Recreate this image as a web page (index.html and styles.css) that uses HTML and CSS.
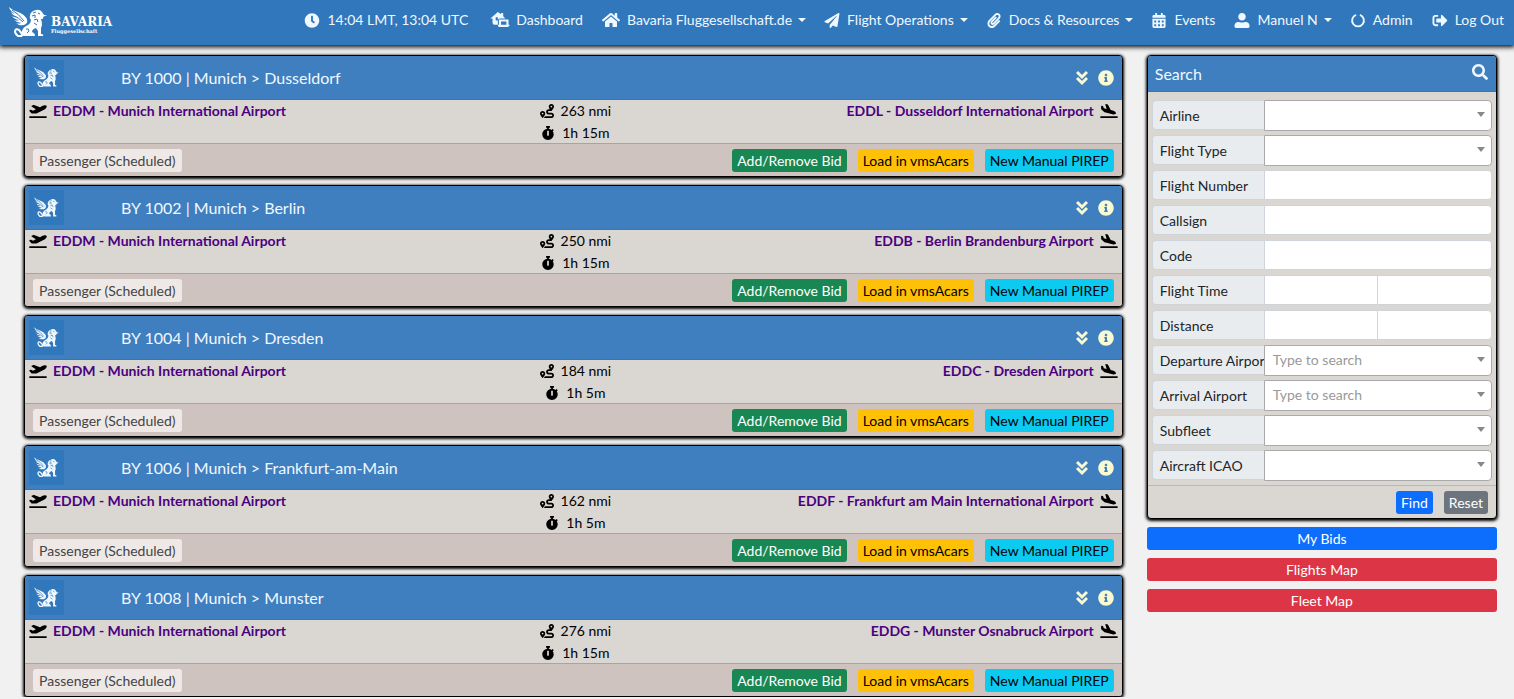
FILE: index.html
```html
<!DOCTYPE html>
<html lang="en">
<head>
<meta charset="utf-8">
<title>Flights - Bavaria Fluggesellschaft</title>
<link rel="stylesheet" href="styles.css">
</head>
<body>
<svg class="sprite" aria-hidden="true">
  <symbol id="griffin" viewBox="0 0 38 31">
    <path d="M0 0Q4 4 9 5Q15 7 18 12Q19 15 17 17Q14 19 10 18L7 16Q10 17 12 16Q7 15 5 13Q8 14 10 13Q5 12 3 9Q6 11 8 10Q3 8 2 5Q4 7 6 7Q1 4 0 0Z"/>
    <path d="M21 8Q22 4 27 3Q31 2 33 5L35 8L38 8L34 10Q35 12 32 12Q33 15 33 18L32 21L32 27Q35 27 34 29H29V24L27 21Q23 22 23 25Q26 26 26 29H15Q12 28 13 24Q14 20 19 18Q22 16 22 13Q20 11 21 8Z"/>
    <path class="tail" d="M14 29Q12 25 10 23Q7 21 6 24Q6 27 9 29H13"/>
    <path class="cut" d="M3 3Q10 7 15 14M5 9Q9 10 14 15M24 6L27 5M23 9L26 8L26 11M25 13L28 12L29 15M29 6L31 7M25 16L28 18M17 22Q20 21 20 24L18 26"/>
  </symbol>
  <symbol id="clock" viewBox="0 0 512 512"><path d="M256,8C119,8,8,119,8,256S119,504,256,504,504,393,504,256,393,8,256,8Zm92.49,313h0l-20,25a16,16,0,0,1-22.49,2.5h0l-67-49.72a40,40,0,0,1-15-31.23V112a16,16,0,0,1,16-16h32a16,16,0,0,1,16,16V256l58,42.5A16,16,0,0,1,348.49,321Z"/></symbol>
  <symbol id="dash" viewBox="0 0 18 15"><path d="M0 6L7 0L10 2V1H12V4L14 6H9Q7 6 7 8V12H4Q2 12 2 10V6ZM5 5V8H7V5ZM8 7H17V12H18Q18 14 16 14H8Q7 14 7 12H8ZM10 9V12H15V9Z" fill-rule="evenodd"/></symbol>
  <symbol id="home" viewBox="0 0 576 512"><path d="M280.37 148.26L96 300.11V464a16 16 0 0 0 16 16l112.06-.29a16 16 0 0 0 15.92-16V368a16 16 0 0 1 16-16h64a16 16 0 0 1 16 16v95.64a16 16 0 0 0 16 16.05L464 480a16 16 0 0 0 16-16V300L295.67 148.26a12.19 12.19 0 0 0-15.3 0zM571.6 251.47L488 182.56V44.05a12 12 0 0 0-12-12h-56a12 12 0 0 0-12 12v72.61L318.47 43a48 48 0 0 0-61 0L4.34 251.47a12 12 0 0 0-1.6 16.9l25.5 31A12 12 0 0 0 45.15 301l235.22-193.74a12.19 12.19 0 0 1 15.3 0L530.9 301a12 12 0 0 0 16.9-1.6l25.5-31a12 12 0 0 0-1.7-16.93z"/></symbol>
  <symbol id="plane" viewBox="0 0 512 512"><path d="M476 3.2L12.5 270.6c-18.1 10.4-15.8 35.6 2.2 43.2L121 358.4l287.3-253.2c5.5-4.9 13.3 2.6 8.6 8.3L176 407v80.5c0 23.6 28.5 32.9 42.5 15.8L282 426l124.6 52.2c14.2 6 30.4-2.9 33-18.2l72-432C515 7.8 493.3-6.8 476 3.2z"/></symbol>
  <symbol id="clip" viewBox="0 0 448 512"><path d="M43.246 466.142c-58.43-60.289-57.341-157.511 1.386-217.581L254.392 34c44.316-45.332 116.351-45.336 160.671 0 43.89 44.894 43.943 117.329 0 162.276L232.214 383.128c-29.855 30.537-78.633 30.111-107.982-.998-28.275-29.97-27.368-77.473 1.452-106.953l143.743-146.835c6.182-6.314 16.312-6.422 22.626-.241l22.861 22.379c6.315 6.182 6.422 16.312.241 22.626L171.427 319.927c-4.932 5.045-5.236 13.428-.648 18.292 4.372 4.634 11.245 4.711 15.688.165l182.849-186.851c19.613-20.062 19.613-52.725-.011-72.798-19.189-19.627-49.957-19.637-69.154 0L90.39 293.295c-34.763 35.56-35.299 93.12-1.191 128.313 34.01 35.093 88.985 35.137 123.058.286l172.06-175.999c6.177-6.319 16.307-6.433 22.626-.256l22.877 22.364c6.319 6.177 6.434 16.307.256 22.626l-172.06 175.998c-59.576 60.938-155.943 60.216-214.77-.485z"/></symbol>
  <symbol id="calendar" viewBox="0 0 448 512"><path fill-rule="evenodd" d="M0 464c0 26.500 21.500 48 48 48h352c26.500 0 48-21.500 48-48V192H0zM64 256h64v64H64zM192 256h64v64h-64zM320 256h64v64h-64zM64 384h64v64H64zM192 384h64v64h-64zM320 384h64v64h-64zM400 64h-48V0h-64v64H160V0H96v64H48C21 64 0 85 0 112v48h448v-48c0-27-21-48-48-48z"/></symbol>
  <symbol id="user" viewBox="0 0 512 512"><path d="M256 256c70.700 0 128-57.300 128-128S326.700 0 256 0 128 57.300 128 128s57.300 128 128 128zm128 48H350c-28 12-60 20-94 20s-66-8-94-20H128C57 304 0 350 0 430v34c0 26.500 21.500 48 48 48h416c26.500 0 48-21.500 48-48v-34c0-80-57-126-128-126z"/></symbol>
  <symbol id="notch" viewBox="0 0 16 16"><path class="line" d="M10 2A6.300 6.300 0 1 1 6 2"/></symbol>
  <symbol id="logout" viewBox="0 0 512 512"><path d="M497 273L329 441c-15 15-41 4.500-41-17v-96H152c-13.300 0-24-10.700-24-24v-96c0-13.300 10.700-24 24-24h136V88c0-21.400 25.900-32 41-17l168 168c9.300 9.400 9.300 24.600 0 34zM192 436v-40c0-6.600-5.400-12-12-12H96c-17.700 0-32-14.300-32-32V160c0-17.700 14.300-32 32-32h84c6.600 0 12-5.400 12-12V76c0-6.600-5.400-12-12-12H96c-53 0-96 43-96 96v192c0 53 43 96 96 96h84c6.600 0 12-5.400 12-12z"/></symbol>
  <symbol id="search" viewBox="0 0 512 512"><path d="M505 442.7L405.3 343c-4.5-4.5-10.6-7-17-7H372c27.6-35.3 44-79.7 44-128C416 93.1 322.9 0 208 0S0 93.1 0 208s93.1 208 208 208c48.3 0 92.7-16.4 128-44v16.3c0 6.4 2.500 12.500 7 17l99.700 99.700c9.400 9.400 24.600 9.400 33.900 0l28.300-28.300c9.400-9.400 9.400-24.600.1-34zM208 336c-70.700 0-128-57.200-128-128 0-70.700 57.200-128 128-128 70.700 0 128 57.200 128 128 0 70.700-57.200 128-128 128z"/></symbol>
  <symbol id="info" viewBox="0 0 512 512"><path d="M256 8C119.043 8 8 119.083 8 256c0 136.997 111.043 248 248 248s248-111.003 248-248C504 119.083 392.957 8 256 8zm0 110c23.196 0 42 18.804 42 42s-18.804 42-42 42-42-18.804-42-42 18.804-42 42-42zm56 254c0 6.627-5.373 12-12 12h-88c-6.627 0-12-5.373-12-12v-24c0-6.627 5.373-12 12-12h12v-64h-12c-6.627 0-12-5.373-12-12v-24c0-6.627 5.373-12 12-12h64c6.627 0 12 5.373 12 12v100h12c6.627 0 12 5.373 12 12v24z"/></symbol>
  <symbol id="more" viewBox="0 0 12 16"><path class="line thick" d="M1 2L6 7L11 2M1 8L6 13L11 8"/></symbol>
  <symbol id="route" viewBox="0 0 512 512"><path d="M416 320h-96c-17.600 0-32-14.400-32-32s14.400-32 32-32h96s96-107 96-160-43-96-96-96-96 43-96 96c0 25.500 22.200 63.400 45.300 96H320c-52.900 0-96 43.100-96 96s43.100 96 96 96h96c17.600 0 32 14.400 32 32s-14.400 32-32 32H185.500c-16 24.800-33.800 47.700-47.300 64H416c52.900 0 96-43.100 96-96s-43.100-96-96-96zm0-256c17.700 0 32 14.300 32 32s-14.300 32-32 32-32-14.300-32-32 14.300-32 32-32zM96 256c-53 0-96 43-96 96s96 160 96 160 96-107 96-160-43-96-96-96zm0 128c-17.700 0-32-14.300-32-32s14.300-32 32-32 32 14.300 32 32-14.300 32-32 32z"/></symbol>
  <symbol id="watch" viewBox="0 0 448 512"><path d="M432 304c0 114.900-93.100 208-208 208S16 418.900 16 304c0-104 76.300-190.200 176-205.500V64h-28c-6.600 0-12-5.400-12-12V12c0-6.600 5.400-12 12-12h120c6.600 0 12 5.400 12 12v40c0 6.600-5.400 12-12 12h-28v34.500c37.500 5.800 71.700 21.600 99.700 44.600l27.500-27.500c4.700-4.700 12.300-4.700 17 0l28.300 28.300c4.700 4.700 4.700 12.300 0 17l-29.400 29.400-.6.6C419.700 223.300 432 262.200 432 304zm-176 36V188.500c0-6.600-5.400-12-12-12h-40c-6.600 0-12 5.400-12 12V340c0 6.600 5.400 12 12 12h40c6.600 0 12-5.400 12-12z"/></symbol>
  <symbol id="depart" viewBox="0 0 640 512"><path d="M624 448H16c-8.84 0-16 7.16-16 16v32c0 8.84 7.16 16 16 16h608c8.84 0 16-7.16 16-16v-32c0-8.84-7.16-16-16-16zM80.55 341.27c6.28 6.84 15.1 10.72 24.33 10.71l130.54-.18a65.62 65.62 0 0 0 29.64-7.12l290.96-147.65c26.74-13.57 50.71-32.94 67.02-58.31 18.31-28.48 20.3-49.09 13.07-63.65-7.21-14.57-24.74-25.27-58.25-27.45-29.85-1.94-59.54 5.92-86.28 19.48l-98.51 49.99-218.7-82.06a17.799 17.799 0 0 0-18-1.11L90.62 67.29c-10.67 5.41-13.25 19.65-5.17 28.53l156.22 98.1-103.21 52.38-72.35-36.47a17.804 17.804 0 0 0-16.07.02L9.91 230.22c-10.44 5.3-13.19 19.12-5.57 28.08l76.21 82.97z"/></symbol>
  <symbol id="arrive" viewBox="0 0 640 512"><path d="M624 448H16c-8.84 0-16 7.16-16 16v32c0 8.84 7.16 16 16 16h608c8.84 0 16-7.16 16-16v-32c0-8.84-7.16-16-16-16zM44.81 205.66l88.74 80a62.607 62.607 0 0 0 25.47 13.93l287.6 78.35c26.48 7.21 54.56 8.72 81 1.36 29.67-8.27 43.44-21.21 47.25-35.71 3.83-14.5-1.73-32.71-23.37-54.96-19.28-19.82-44.35-32.79-70.83-40l-97.51-26.56L282.8 30.22c-1.51-5.81-5.95-10.35-11.66-11.91L206.05.58c-10.56-2.88-20.9 5.32-20.71 16.44l47.92 164.21-102.2-27.84-27.59-67.88c-1.93-4.89-6.01-8.57-11.02-9.93L52.72 64.75c-10.34-2.82-20.53 5-20.72 15.88l.23 101.78c.19 8.91 6.03 17.34 12.58 23.25z"/></symbol>
</svg>

<header class="navbar">
  <a class="brand" href="#">
    <svg class="brand-mark"><use href="#griffin"/></svg>
    <span class="brand-text"><span class="brand-name">BAVARIA</span><span class="brand-sub">Fluggesellschaft</span></span>
  </a>
  <nav class="menu">
    <span class="item clock"><svg class="icon"><use href="#clock"/></svg>14:04 LMT, 13:04 UTC</span>
    <a class="item" href="#"><svg class="icon wide"><use href="#dash"/></svg>Dashboard</a>
    <a class="item drop" href="#"><svg class="icon wide"><use href="#home"/></svg>Bavaria Fluggesellschaft.de</a>
    <a class="item drop" href="#"><svg class="icon"><use href="#plane"/></svg>Flight Operations</a>
    <a class="item drop" href="#"><svg class="icon"><use href="#clip"/></svg>Docs &amp; Resources</a>
    <a class="item" href="#"><svg class="icon"><use href="#calendar"/></svg>Events</a>
    <a class="item drop" href="#"><svg class="icon"><use href="#user"/></svg>Manuel N</a>
    <a class="item" href="#"><svg class="icon"><use href="#notch"/></svg>Admin</a>
    <a class="item" href="#"><svg class="icon"><use href="#logout"/></svg>Log Out</a>
  </nav>
</header>

<main class="page">
  <section class="flights">
    <article class="card">
      <header class="flight-head"><span class="airline"><svg class="airline-mark"><use href="#griffin"/></svg></span><h2 class="title">BY 1000 | Munich &gt; Dusseldorf</h2><a class="tool" href="#" aria-label="More"><svg class="more"><use href="#more"/></svg></a><a class="tool" href="#" aria-label="Details"><svg class="info"><use href="#info"/></svg></a></header>
      <div class="flight-body">
        <div class="from"><svg class="jet"><use href="#depart"/></svg><a class="airport" href="#">EDDM - Munich International Airport</a></div>
        <div class="facts"><span class="fact"><svg class="fact-icon"><use href="#route"/></svg>263 nmi</span><span class="fact"><svg class="fact-icon"><use href="#watch"/></svg>1h 15m</span></div>
        <div class="to"><a class="airport" href="#">EDDL - Dusseldorf International Airport</a><svg class="jet"><use href="#arrive"/></svg></div>
      </div>
      <footer class="flight-foot"><span class="badge">Passenger (Scheduled)</span><button class="btn green" type="button">Add/Remove Bid</button><a class="btn amber" href="#">Load in vmsAcars</a><a class="btn cyan" href="#">New Manual PIREP</a></footer>
    </article>
    <article class="card">
      <header class="flight-head"><span class="airline"><svg class="airline-mark"><use href="#griffin"/></svg></span><h2 class="title">BY 1002 | Munich &gt; Berlin</h2><a class="tool" href="#" aria-label="More"><svg class="more"><use href="#more"/></svg></a><a class="tool" href="#" aria-label="Details"><svg class="info"><use href="#info"/></svg></a></header>
      <div class="flight-body">
        <div class="from"><svg class="jet"><use href="#depart"/></svg><a class="airport" href="#">EDDM - Munich International Airport</a></div>
        <div class="facts"><span class="fact"><svg class="fact-icon"><use href="#route"/></svg>250 nmi</span><span class="fact"><svg class="fact-icon"><use href="#watch"/></svg>1h 15m</span></div>
        <div class="to"><a class="airport" href="#">EDDB - Berlin Brandenburg Airport</a><svg class="jet"><use href="#arrive"/></svg></div>
      </div>
      <footer class="flight-foot"><span class="badge">Passenger (Scheduled)</span><button class="btn green" type="button">Add/Remove Bid</button><a class="btn amber" href="#">Load in vmsAcars</a><a class="btn cyan" href="#">New Manual PIREP</a></footer>
    </article>
    <article class="card">
      <header class="flight-head"><span class="airline"><svg class="airline-mark"><use href="#griffin"/></svg></span><h2 class="title">BY 1004 | Munich &gt; Dresden</h2><a class="tool" href="#" aria-label="More"><svg class="more"><use href="#more"/></svg></a><a class="tool" href="#" aria-label="Details"><svg class="info"><use href="#info"/></svg></a></header>
      <div class="flight-body">
        <div class="from"><svg class="jet"><use href="#depart"/></svg><a class="airport" href="#">EDDM - Munich International Airport</a></div>
        <div class="facts"><span class="fact"><svg class="fact-icon"><use href="#route"/></svg>184 nmi</span><span class="fact"><svg class="fact-icon"><use href="#watch"/></svg>1h 5m</span></div>
        <div class="to"><a class="airport" href="#">EDDC - Dresden Airport</a><svg class="jet"><use href="#arrive"/></svg></div>
      </div>
      <footer class="flight-foot"><span class="badge">Passenger (Scheduled)</span><button class="btn green" type="button">Add/Remove Bid</button><a class="btn amber" href="#">Load in vmsAcars</a><a class="btn cyan" href="#">New Manual PIREP</a></footer>
    </article>
    <article class="card">
      <header class="flight-head"><span class="airline"><svg class="airline-mark"><use href="#griffin"/></svg></span><h2 class="title">BY 1006 | Munich &gt; Frankfurt-am-Main</h2><a class="tool" href="#" aria-label="More"><svg class="more"><use href="#more"/></svg></a><a class="tool" href="#" aria-label="Details"><svg class="info"><use href="#info"/></svg></a></header>
      <div class="flight-body">
        <div class="from"><svg class="jet"><use href="#depart"/></svg><a class="airport" href="#">EDDM - Munich International Airport</a></div>
        <div class="facts"><span class="fact"><svg class="fact-icon"><use href="#route"/></svg>162 nmi</span><span class="fact"><svg class="fact-icon"><use href="#watch"/></svg>1h 5m</span></div>
        <div class="to"><a class="airport" href="#">EDDF - Frankfurt am Main International Airport</a><svg class="jet"><use href="#arrive"/></svg></div>
      </div>
      <footer class="flight-foot"><span class="badge">Passenger (Scheduled)</span><button class="btn green" type="button">Add/Remove Bid</button><a class="btn amber" href="#">Load in vmsAcars</a><a class="btn cyan" href="#">New Manual PIREP</a></footer>
    </article>
    <article class="card">
      <header class="flight-head"><span class="airline"><svg class="airline-mark"><use href="#griffin"/></svg></span><h2 class="title">BY 1008 | Munich &gt; Munster</h2><a class="tool" href="#" aria-label="More"><svg class="more"><use href="#more"/></svg></a><a class="tool" href="#" aria-label="Details"><svg class="info"><use href="#info"/></svg></a></header>
      <div class="flight-body">
        <div class="from"><svg class="jet"><use href="#depart"/></svg><a class="airport" href="#">EDDM - Munich International Airport</a></div>
        <div class="facts"><span class="fact"><svg class="fact-icon"><use href="#route"/></svg>276 nmi</span><span class="fact"><svg class="fact-icon"><use href="#watch"/></svg>1h 15m</span></div>
        <div class="to"><a class="airport" href="#">EDDG - Munster Osnabruck Airport</a><svg class="jet"><use href="#arrive"/></svg></div>
      </div>
      <footer class="flight-foot"><span class="badge">Passenger (Scheduled)</span><button class="btn green" type="button">Add/Remove Bid</button><a class="btn amber" href="#">Load in vmsAcars</a><a class="btn cyan" href="#">New Manual PIREP</a></footer>
    </article>
  </section>

  <aside class="side">
    <form class="card">
      <header class="search-head"><h2 class="title">Search</h2><svg class="search-icon"><use href="#search"/></svg></header>
      <div class="fields">
        <div class="field"><label class="label" for="airline">Airline</label><span class="pick"><select class="select" id="airline"><option></option></select></span></div>
        <div class="field"><label class="label" for="type">Flight Type</label><span class="pick"><select class="select" id="type"><option></option></select></span></div>
        <div class="field"><label class="label" for="number">Flight Number</label><input class="input" id="number" type="text"></div>
        <div class="field"><label class="label" for="callsign">Callsign</label><input class="input" id="callsign" type="text"></div>
        <div class="field"><label class="label" for="code">Code</label><input class="input" id="code" type="text"></div>
        <div class="field"><label class="label" for="time">Flight Time</label><input class="input" id="time" type="text"><input class="input" type="text" aria-label="Maximum flight time"></div>
        <div class="field"><label class="label" for="distance">Distance</label><input class="input" id="distance" type="text"><input class="input" type="text" aria-label="Maximum distance"></div>
        <div class="field"><label class="label" for="dep">Departure Airport</label><span class="pick"><select class="select" id="dep"><option>Type to search</option></select></span></div>
        <div class="field"><label class="label" for="arr">Arrival Airport</label><span class="pick"><select class="select" id="arr"><option>Type to search</option></select></span></div>
        <div class="field"><label class="label" for="subfleet">Subfleet</label><span class="pick"><select class="select" id="subfleet"><option></option></select></span></div>
        <div class="field"><label class="label" for="icao">Aircraft ICAO</label><span class="pick"><select class="select" id="icao"><option></option></select></span></div>
      </div>
      <footer class="search-foot"><button class="btn blue" type="submit">Find</button><button class="btn grey" type="reset">Reset</button></footer>
    </form>
    <a class="btn blue" href="#">My Bids</a>
    <a class="btn red" href="#">Flights Map</a>
    <a class="btn red" href="#">Fleet Map</a>
  </aside>
</main>
</body>
</html>
```

FILE: styles.css
```css
* { box-sizing: border-box; }

body {
  margin: 0;
  background: #f1f1f1;
  color: #000;
  font: 14px/22px Lato, sans-serif;
}

a { color: inherit; text-decoration: none; }
svg { display: block; flex: none; fill: currentColor; }
.sprite { position: absolute; width: 0; height: 0; }
.line { fill: none; stroke: currentColor; stroke-width: 2; }
.thick { stroke-width: 3; }
.tail { fill: none; stroke: currentColor; stroke-width: 2; }
.cut { fill: none; stroke: #3177bc; stroke-width: 1; }

/* Navigation bar */
.navbar {
  display: flex;
  align-items: center;
  justify-content: space-between;
  height: 45px;
  padding: 0 10px 0 9px;
  background: #3177bc;
  color: #f0f8ff;
  box-shadow: 0 1px 5px 1px #000;
}
.brand { display: flex; align-items: center; gap: 4px; color: #fff; }
.brand-mark { width: 38px; height: 31px; }
.brand-text { display: flex; flex-direction: column; padding-top: 4px; font-family: "DejaVu Serif", serif; font-weight: 700; }
.brand-name { font-size: 12px; line-height: 12px; }
.brand-sub { font-size: 5px; line-height: 6px; }
.menu { display: flex; align-items: center; gap: 17px; padding-bottom: 5px; }
.item { display: flex; align-items: center; margin-right: 1px; white-space: nowrap; }
.item:last-child { margin-right: 0; }
.clock { margin-right: 5px; }
.icon { width: 18px; height: 15px; margin-right: 6px; }
.wide { width: 20px; height: 16px; }
.drop { margin-right: 0; }
.drop::after {
  content: "";
  margin-left: 6px;
  border: 4px solid transparent;
  border-top-color: currentColor;
  border-bottom: 0;
}

/* Page columns */
.page { display: flex; align-items: flex-start; padding: 10px 5px 0 12px; }
.flights, .side { display: flex; flex-direction: column; gap: 8px; padding: 0 12px; }
.flights { width: 75%; }
.side { width: 25%; }
.card {
  overflow: hidden;
  border: 1px solid #000;
  border-radius: 4px;
  background: #dad6d1;
  box-shadow: 0 1px 3px 1px #000;
}
.title { flex: 1; margin: 0; font-size: 16px; font-weight: 400; line-height: 24px; }

/* Flight cards */
.flight-head {
  display: flex;
  align-items: center;
  height: 44px;
  padding: 0 8px 0 4px;
  border-bottom: 1px solid #3177bc;
  background: #3f7fbf;
  color: #f0f8ff;
}
.airline { display: grid; place-items: center; width: 35px; height: 35px; margin-right: 57px; background: #3177bc; }
.airline-mark { width: 25px; height: 21px; }
.tool { color: #fafad2; }
.more { width: 12px; height: 16px; margin-right: 10px; }
.info { width: 16px; height: 16px; }
.flight-body { display: grid; grid-template-columns: 1fr auto 1fr; height: 43px; padding: 0 4px; }
.from, .to { display: flex; align-items: center; height: 22px; gap: 6px; }
.to { justify-content: flex-end; }
.jet { width: 18px; height: 14px; }
.airport { color: #4b0082; font-weight: 700; }
.facts { display: flex; flex-direction: column; align-items: center; padding-left: 4px; }
.fact { display: flex; align-items: center; }
.fact-icon { width: 14px; height: 14px; margin-right: 7px; }
.flight-foot {
  display: flex;
  align-items: center;
  gap: 11px;
  height: 33px;
  padding: 0 8px;
  border-top: 1px solid #aba3a0;
  background: #cec3bf;
}
.badge { margin-right: auto; padding: 0 6px; border-radius: 3px; background: #eee9e7; color: #444; line-height: 23px; }
.btn {
  padding: 0 5px;
  border: 0;
  border-radius: 3px;
  font: inherit;
  line-height: 23px;
  text-align: center;
}
.green { background: #198754; color: #fff; }
.amber { background: #ffc107; }
.cyan { background: #0dcaf0; }
.blue { background: #0d6efd; color: #fff; }
.grey { background: #6c757d; color: #fff; }
.red { background: #dc3545; color: #fff; }

/* Search panel */
.search-head {
  display: flex;
  align-items: center;
  height: 36px;
  padding: 0 8px 0 7px;
  border-bottom: 1px solid #3177bc;
  background: #3f7fbf;
  color: #f0f8ff;
}
.search-icon { width: 16px; height: 16px; margin-bottom: 4px; }
.fields { display: flex; flex-direction: column; gap: 4px; padding: 8px 4px 4px; }
.field { display: flex; align-items: flex-start; height: 31px; }
.label {
  width: 112px;
  height: 30px;
  padding-left: 7px;
  overflow: hidden;
  border: 1px solid #ced4da;
  border-right: 0;
  border-radius: 4px 0 0 4px;
  background: #e9ecef;
  color: #212529;
  line-height: 29px;
  white-space: nowrap;
}
.input { flex: 1; min-width: 0; height: 30px; border: 1px solid #ced4da; border-right-width: 0; background: #fff; font: inherit; }
.input:last-child { border-right-width: 1px; border-radius: 0 4px 4px 0; }
.pick { position: relative; flex: 1; height: 31px; }
.pick::after {
  content: "";
  position: absolute;
  top: 12px;
  right: 7px;
  border: 4px solid transparent;
  border-top: 5px solid #888;
  border-bottom: 0;
  pointer-events: none;
}
.select {
  display: block;
  width: 100%;
  height: 31px;
  padding: 0 8px 2px;
  border: 1px solid #aaa;
  border-radius: 0 4px 4px 0;
  background: #fff;
  color: #999;
  font: inherit;
  appearance: none;
}
.search-foot {
  display: flex;
  align-items: center;
  justify-content: flex-end;
  gap: 11px;
  height: 33px;
  padding: 0 8px;
  border-top: 1px solid #bbb8b4;
}
```
